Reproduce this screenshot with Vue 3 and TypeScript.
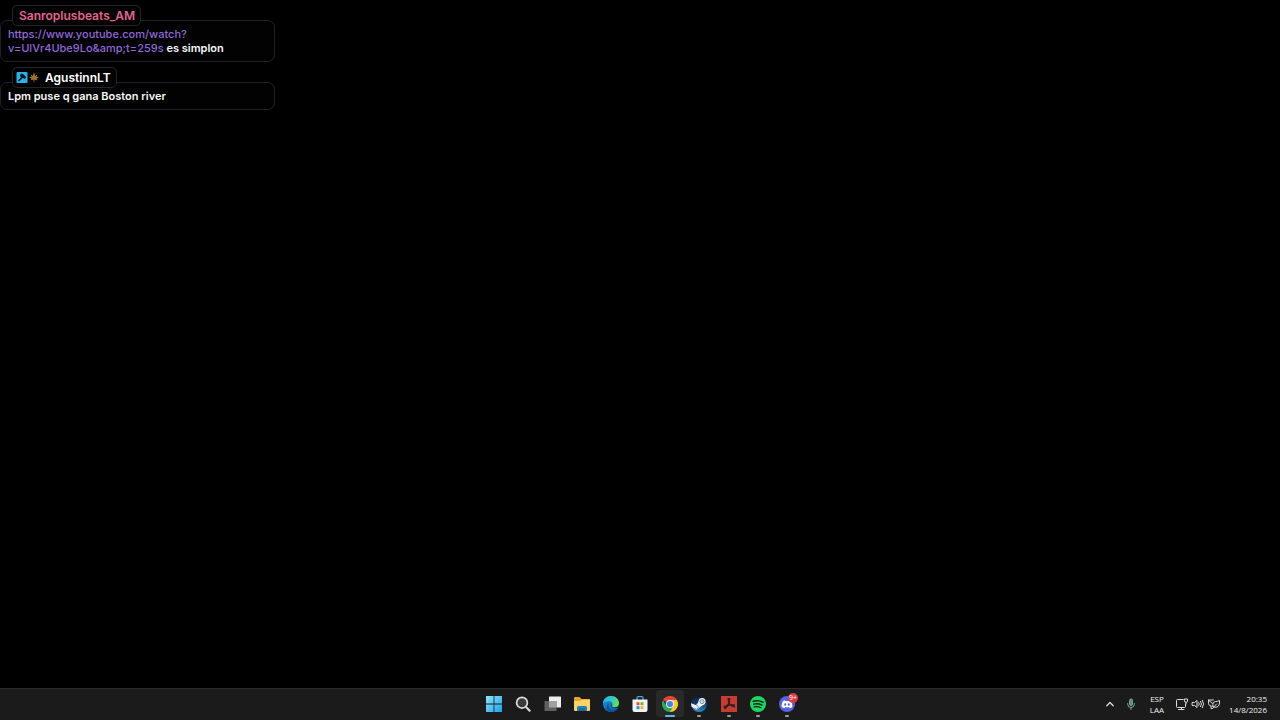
<script setup lang="ts">
interface Message {
  id: number
  user: string
  tone: string
  badges: boolean
  link?: string
  text: string
}

const messages: Message[] = [
  {
    id: 1,
    user: 'Sanroplusbeats_AM',
    tone: 'pink',
    badges: false,
    link: 'https://www.youtube.com/watch?v=UlVr4Ube9Lo&amp;t=259s',
    text: 'es simplon',
  },
  { id: 2, user: 'AgustinnLT', tone: 'white', badges: true, text: 'Lpm puse q gana Boston river' },
]
</script>

<template>
  <div class="screen">
    <main class="chat">
      <ul class="messages">
        <li v-for="m in messages" :key="m.id" class="message">
          <div class="name" :class="[m.tone, { badged: m.badges }]">
            <span v-if="m.badges" class="badges">
              <svg viewBox="0 0 12 12" width="12" height="12" aria-hidden="true">
                <rect x=".5" width="11" height="11" rx="1" fill="#25b5ee" />
                <path d="M5 1.500 7 2.100 10 4.700 9.200 6.900 7 6.100 3 9.500 1.900 8.400 5.200 5.100 3.800 3.900Z" fill="#06141c" />
              </svg>
              <svg viewBox="0 0 12 12" width="12" height="12" aria-hidden="true">
                <path d="M6 .3 7.200 3.900 9.300 2.300 8.600 4.900 11 4.700 8.700 6.700 9.400 8.300 6.500 7.800 6.300 10.500H5.700L5.500 7.800 2.600 8.300 3.300 6.700 1 4.700l2.400.2L2.700 2.300 4.800 3.900Z" fill="#a0702f" />
              </svg>
            </span>
            <span>{{ m.user }}</span>
          </div>
          <p class="body"><template v-if="m.link"><a :href="m.link">{{ m.link }}</a>{{ ' ' }}</template>{{ m.text }}</p>
        </li>
      </ul>
    </main>

    <footer class="taskbar">
      <nav class="apps" aria-label="Taskbar">
        <button class="app" aria-label="Start">
          <svg viewBox="0 0 18 18">
            <defs>
              <linearGradient id="win" x1="0" y1="0" x2="1" y2="1">
                <stop offset="0" stop-color="#8be3fb" />
                <stop offset="1" stop-color="#1fa5e8" />
              </linearGradient>
            </defs>
            <path d="M1 1h7.600v7.600H1zM9.400 1H17v7.600H9.400zM1 9.400h7.600V17H1zM9.400 9.400H17V17H9.400z" fill="url(#win)" />
          </svg>
        </button>
        <button class="app" aria-label="Search">
          <svg viewBox="0 0 18 18" fill="none">
            <circle cx="8" cy="7.700" r="5.400" fill="#3b3b3b" stroke="#dedede" stroke-width="1.700" />
            <path d="m12 12 3.700 3.800" stroke="#dedede" stroke-width="2" stroke-linecap="round" />
          </svg>
        </button>
        <button class="app" aria-label="Task view">
          <svg viewBox="0 0 18 18">
            <rect x="6" y="1.500" width="12" height="11" rx=".6" fill="#ededed" />
            <rect x="1.500" y="6" width="12" height="10" rx=".6" fill="#606060" />
            <path d="M6 6h7.500v6.500H6z" fill="#a0a0a0" />
          </svg>
        </button>
        <button class="app" aria-label="File Explorer">
          <svg viewBox="0 0 18 18">
            <path d="M1 3q0-1 1-1h4.500l2 2H16q1 0 1 1v3H1z" fill="#e3a52d" />
            <path d="M1 6h6l1.500-1.300H17V15q0 1-1 1H2q-1 0-1-1z" fill="#fbd463" />
            <path d="M4 16v-3.500q0-1.500 1.500-1.500h7q1.500 0 1.500 1.500V16z" fill="#1684c7" />
            <path d="M6 13.500h6V16H6z" fill="#2c6486" />
          </svg>
        </button>
        <button class="app" aria-label="Edge">
          <svg viewBox="0 0 18 18">
            <defs>
              <linearGradient id="edgeTop" x1="0" y1="0" x2="1" y2=".4">
                <stop offset="0" stop-color="#24aef0" />
                <stop offset=".5" stop-color="#2bc7cf" />
                <stop offset="1" stop-color="#62df58" />
              </linearGradient>
              <linearGradient id="edgeLow" x1="0" y1="0" x2="1" y2="1">
                <stop offset="0" stop-color="#1c91de" />
                <stop offset="1" stop-color="#0d5aaa" />
              </linearGradient>
            </defs>
            <circle cx="9" cy="9" r="8" fill="url(#edgeLow)" />
            <path d="M1 8.500C1.300 4 4.600 1 9 1c4.700 0 8 3.400 8 7 0 2.800-2 4.300-4.300 4.300-1.700 0-3.100-.7-2.700-1.500 1.400-1.600.4-4.600-2.700-4.600C4.500 6.200 2.200 7 1 8.500Z" fill="url(#edgeTop)" />
            <path d="M7.400 8.500c-2 1.700-1 5.600 3 6.300 2 .3 3.800-.4 5.200-1.400-1.500 2.500-4.400 3.900-7.500 3.500-3-.6-3.800-3-3.500-5 .3-1.700 1.300-2.900 2.800-3.400Z" fill="#12509b" />
            <path d="M10 9.500c.1.700-.4 1.100-.1 1.700.6 1.100 2.700 1.500 4.700.9 1-.3 1.700-.7 2-1.200 0 .6-.3 1.100-.6 1.500-2 1-4.500.9-6-.3-1-.9-.9-2.200 0-2.600Z" fill="#1b1b1b" />
          </svg>
        </button>
        <button class="app" aria-label="Microsoft Store">
          <svg viewBox="0 0 18 18">
            <path d="M6 5V3q0-1.400 1.400-1.400h3.200Q12 1.600 12 3v2" fill="none" stroke="#39aee6" stroke-width="1.300" />
            <path d="M1.500 4.500h15V15q0 2-2 2h-11q-2 0-2-2z" fill="#f0f2f4" />
            <path d="M5.500 7.200h3v3h-3z" fill="#ee5132" />
            <path d="M9.500 7.200h3v3h-3z" fill="#77b82b" />
            <path d="M5.500 11.200h3v3h-3z" fill="#1698df" />
            <path d="M9.500 11.200h3v3h-3z" fill="#f6b72a" />
          </svg>
        </button>
        <button class="app active" aria-label="Chrome">
          <svg viewBox="0 0 18 18">
            <path d="M9 9 2.070 5A8 8 0 0 1 15.930 5Z" fill="#e8433a" />
            <path d="M9 9V5h6.930A8 8 0 0 1 9 17Z" fill="#fbc82d" />
            <path d="M9 17A8 8 0 0 1 2.070 5L5.540 11 9 9l3.460 2Z" fill="#30a753" />
            <circle cx="9" cy="9" r="4" fill="#f5f7f8" />
            <circle cx="9" cy="9" r="3.100" fill="#4285e8" />
          </svg>
        </button>
        <button class="app running" aria-label="Steam">
          <svg viewBox="0 0 18 18">
            <defs>
              <linearGradient id="steam" x1="0" y1="0" x2="0" y2="1">
                <stop offset="0" stop-color="#101c35" />
                <stop offset=".5" stop-color="#153f70" />
                <stop offset="1" stop-color="#2590cf" />
              </linearGradient>
            </defs>
            <circle cx="9" cy="9" r="8" fill="url(#steam)" />
            <path d="m1 8.200 5.200 2 2.500-3.600 5.500 2.600-5.400 3.900-2.700 1.600L1.500 11.600Z" fill="#f0f3f5" />
            <circle cx="12" cy="6.600" r="3.500" fill="#f0f3f5" />
            <circle cx="12" cy="6.600" r="2" fill="#d4dde5" stroke="#35547a" stroke-width=".6" />
            <circle cx="6.500" cy="12.200" r="2.400" fill="#f0f3f5" />
            <path d="M4.800 12.600a1.800 1.800 0 1 0 1.500-2.200" fill="none" stroke="#2d6699" stroke-width=".6" />
          </svg>
        </button>
        <button class="app running" aria-label="Game">
          <svg viewBox="0 0 18 18">
            <path d="M1 1h16v16H1z" fill="#c73c31" />
            <path d="M7.400 3h3l-.5 5-1.800.1z" fill="#39201d" />
            <path d="m8.100 9 1.200 1.600L5 14.600 3 11.400z" fill="#39201d" />
            <path d="m10 8.900 4.800.4.300 3.700-5.600-2.600z" fill="#39201d" />
            <circle cx="9" cy="9.300" r="1.500" fill="#39201d" />
          </svg>
        </button>
        <button class="app running" aria-label="Spotify">
          <svg viewBox="0 0 18 18">
            <circle cx="9" cy="9" r="8" fill="#1ed760" />
            <g fill="none" stroke="#14221a" stroke-linecap="round">
              <path d="M4.300 6.300c3.300-.9 6.700-.6 9.700.9" stroke-width="1.700" />
              <path d="M4.700 9.200c2.900-.8 5.700-.5 8.300.9" stroke-width="1.400" />
              <path d="M5.100 11.900c2.400-.6 4.700-.4 6.900.8" stroke-width="1.200" />
            </g>
          </svg>
        </button>
        <button class="app running" aria-label="Discord, 9+ notifications">
          <svg viewBox="0 0 18 18">
            <circle cx="9" cy="9" r="8" fill="#5762e8" />
            <path d="M6.800 5.200 5 5.900C3.900 7.700 3.500 9.800 3.700 12c.9.700 1.800 1.100 2.600 1.200l.7-1.100c1.300.4 2.700.4 4 0l.7 1.100c.9-.2 1.800-.6 2.600-1.200.2-2.200-.3-4.300-1.300-6.100l-1.800-.7-.4.8H7.200z" fill="#fff" />
            <ellipse cx="7.200" cy="9.500" rx="1" ry="1.200" fill="#5762e8" />
            <ellipse cx="10.800" cy="9.500" rx="1" ry="1.200" fill="#5762e8" />
          </svg>
          <span class="count">9+</span>
        </button>
      </nav>

      <div class="tray">
        <button class="tray-icon chevron" aria-label="Show hidden icons">
          <svg viewBox="0 0 14 14"><path d="m3.800 8.700 3.200-3.200 3.200 3.200" stroke-width="1.300" /></svg>
        </button>
        <button class="tray-icon mic" aria-label="Microphone">
          <svg viewBox="0 0 14 14">
            <rect x="5.500" y="2" width="3" height="6.500" rx="1.500" fill="#5a8582" />
            <path d="M3.700 6.500v.7a3.300 3.300 0 0 0 6.600 0v-.7M7 10.500v2" />
          </svg>
        </button>
        <button class="label language"><span>ESP</span><span>LAA</span></button>
        <button class="quick" aria-label="Network, volume and battery">
          <svg viewBox="0 0 14 14">
            <path d="M8 2.500H2.500q-1 0-1 1v6q0 1 1 1h7q1 0 1-1V7M3.500 12.500h5.500M6.500 10.500v2" />
            <path d="M9.500 2h3v2.500q0 .8-1.500.8T9.500 4.500zM11 5.300V7" />
          </svg>
          <svg viewBox="0 0 14 14">
            <path d="M1.500 5.500h2L6 3.500v7L3.500 8.500h-2zM7.800 5.500q1.200 1.500 0 3M9.600 4.300q1.800 2.700 0 5.400M11.400 3.200q2.600 3.800 0 7.600" />
          </svg>
          <svg viewBox="0 0 14 14">
            <path d="M6.500 3h-5v3.500Q1.500 8 3 8.500L4 9M1.500 3l4 3.500M4 9v2.500h1.500" />
            <path d="M6 9.500Q5 5 8.500 4.500 11 4.500 12.500 3.500 13 9 10 10q-2.500 1-4-.5ZM5.500 11.500 9.500 7" />
          </svg>
        </button>
        <button class="label clock"><span>20:35</span><span>14/8/2026</span></button>
      </div>
    </footer>
  </div>
</template>

<style scoped>
.screen {
  min-height: 100vh;
  display: flex;
  flex-direction: column;
  background: #000;
}

.chat {
  flex: 1;
}

.messages {
  list-style: none;
  margin: 0;
  padding: 0;
  max-width: 275px;
  font-family: Inter, "Noto Sans", sans-serif;
}

.message {
  padding-top: 5px;
  display: flex;
  flex-direction: column;
  align-items: flex-start;
}

.name {
  z-index: 1;
  display: flex;
  align-items: center;
  gap: 5px;
  box-sizing: border-box;
  height: 21px;
  margin: 0 0 -6px 12px;
  padding: 0 5px 0 6px;
  border: 1px solid #24242a;
  border-radius: 5px;
  background: #030304;
  font-size: 12px;
  font-weight: 600;
  line-height: 18px;
}

.badged {
  padding-left: 3px;
}

.pink {
  color: #e2638f;
}

.white {
  color: #fff;
}

.badges {
  display: flex;
}

.body {
  box-sizing: border-box;
  width: 100%;
  margin: 0;
  padding: 6px 7px;
  border: 1px solid #202026;
  border-radius: 7px;
  background: #020203;
  color: #f8f8f8;
  font-size: 11px;
  font-weight: 600;
  line-height: 14px;
}

.body a {
  color: #9068d8;
  font-weight: 500;
  text-decoration: none;
}

.taskbar {
  display: grid;
  grid-template-columns: 1fr 323px 1fr;
  box-sizing: border-box;
  height: 32px;
  padding: 0 0 2px 1px;
  border-top: 1px solid #2c2c2c;
  background: #1b1b1b;
}

button {
  padding: 0;
  border: 0;
  background: none;
  color: #f0f0f0;
}

.apps {
  grid-column: 2;
  display: grid;
  grid-template-columns: repeat(11, 1fr);
  align-items: center;
}

.app {
  position: relative;
  display: flex;
  justify-content: center;
  align-items: center;
  height: 27px;
  margin: 0 1px;
  border-radius: 3px;
}

.app svg {
  width: 18px;
  height: 18px;
}

.active {
  background: #292929;
}

.active::after,
.running::after {
  content: "";
  position: absolute;
  bottom: 0;
  width: 4px;
  height: 2px;
  border-radius: 1px;
  background: #a0a0a0;
}

.active::after {
  width: 10px;
  background: #58bbe8;
}

.count {
  position: absolute;
  top: 3px;
  right: 3px;
  width: 10px;
  height: 10px;
  border-radius: 5px;
  background: #d83a42;
  color: #fff;
  font: 7px/10px "Open Sans", sans-serif;
  text-align: center;
}

.tray {
  display: flex;
  justify-content: flex-end;
  align-items: center;
  padding-right: 13px;
}

.tray svg {
  display: block;
  width: 14px;
  height: 14px;
  fill: none;
  stroke: #dcdcdc;
  stroke-width: 1;
  stroke-linecap: round;
  stroke-linejoin: round;
}

.chevron {
  margin-right: 7px;
}

.mic {
  margin-right: 12px;
}

.mic svg {
  stroke: #7da5a2;
}

.label {
  display: flex;
  flex-direction: column;
  font: 8px/11px "Open Sans", "Noto Sans", sans-serif;
}

.language {
  align-items: center;
  margin-right: 11px;
}

.quick {
  display: flex;
  gap: 2px;
  margin-right: 8px;
}

.clock {
  align-items: flex-end;
}
</style>

<style>
body {
  margin: 0;
  background: #000;
}
</style>
